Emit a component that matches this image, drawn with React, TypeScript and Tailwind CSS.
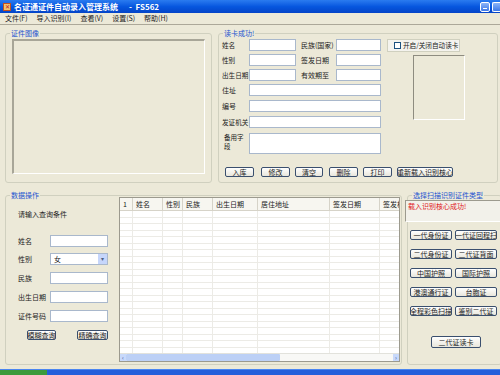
import React from "react";

const font = "font-['Noto_Sans_CJK_SC','Noto_Sans',sans-serif]";

function Group({ title, className, children }: { title: string; className?: string; children?: React.ReactNode }) {
  return (
    <div className={"relative border border-[#d0d0bf] rounded-[3px] " + (className ?? "")}>
      <span className="absolute -top-[6px] left-[4px] bg-[#ece9d8] px-[1px] text-[7px] leading-[10px] text-[#2454d0] whitespace-nowrap">{title}</span>
      {children}
    </div>
  );
}

function Field({ w, h = 12 }: { w: number; h?: number }) {
  return <div className="bg-white border border-[#a9b8cc] shrink-0" style={{ width: w, height: h }} />;
}

function Btn({ label, w, className }: { label: string; w: number; className?: string }) {
  return (
    <div
      className={"h-[10px] flex items-center justify-center border border-[#3a4f6e] rounded-[2px] bg-gradient-to-b from-white to-[#e8e6dc] text-[7px] leading-none text-[#222] whitespace-nowrap overflow-hidden shrink-0 " + (className ?? "")}
      style={{ width: w }}
    >
      {label}
    </div>
  );
}

const cols = [
  { t: "1", w: 13 },
  { t: "姓名", w: 30 },
  { t: "性别", w: 20 },
  { t: "民族", w: 30 },
  { t: "出生日期", w: 45 },
  { t: "居住地址", w: 72 },
  { t: "签发日期", w: 50 },
  { t: "签发机", w: 20 },
];

export default function App() {
  const rows = Array.from({ length: 22 });

  return (
    <div className={"w-[500px] h-[375px] overflow-hidden bg-[#ece9d8] flex flex-col text-[#222] whitespace-nowrap " + font}>
      {/* title bar */}
      <div className="h-[13px] flex items-center bg-gradient-to-b from-[#2a7bf0] via-[#0757df] to-[#0444c8] pl-[3px]">
        <div className="w-[8px] h-[8px] bg-[#f0c070] border border-[#c05020] flex items-center justify-center text-[6px] leading-none text-[#c02020]">✕</div>
        <span className="ml-[3px] text-[8px] leading-none font-bold text-white whitespace-pre">名证通证件自动录入管理系统      -  FS562</span>
        <div className="ml-auto flex gap-[2px]">
          <div className="w-[10px] h-[10px] rounded-[2px] border border-white bg-gradient-to-b from-[#8cb4f8] to-[#3c78e8] flex items-end justify-center pb-[2px]">
            <div className="w-[4px] h-[1px] bg-white" />
          </div>
          <div className="w-[8px] h-[10px] rounded-l-[2px] border border-r-0 border-white bg-gradient-to-b from-[#8cb4f8] to-[#3c78e8]" />
        </div>
      </div>

      {/* menu bar */}
      <div className="h-[12px] flex items-center gap-[9px] pl-[5px] text-[7px] leading-none border-b border-[#aca899]">
        <span>文件(F)</span>
        <span>导入识别(I)</span>
        <span>查看(V)</span>
        <span>设置(S)</span>
        <span>帮助(H)</span>
      </div>

      {/* body */}
      <div className="flex-1 flex">
        <div className="w-[3px] bg-[#0a3fc8]" />
        <div className="flex-1 flex flex-col pl-[5px]">
          {/* top row */}
          <div className="flex mt-[8px]">
            <Group title="证件图像" className="w-[207px] h-[150px] flex flex-col pt-[4px] px-[6px]">
              <div className="mt-[1px] w-[193px] h-[135px] border-t-2 border-l-2 border-[#a8a698] border-b border-r border-b-white border-r-white" />
            </Group>

            <Group title="读卡成功!" className="ml-[6px] w-[280px] h-[150px] pl-[3px] pt-[5px] text-[7px] leading-none">
              <div className="flex">
                <div className="flex flex-col w-[160px]">
                  {[
                    ["姓名", "民族(国家)"],
                    ["性别", "签发日期"],
                    ["出生日期", "有效期至"],
                  ].map(([a, b], i) => (
                    <div key={a} className={"flex items-center " + (i > 0 ? "mt-[3px]" : "")}>
                      <span className="w-[27px] text-[6.6px]">{a}</span>
                      <Field w={47} />
                      <span className="w-[35px] ml-[5px]">{b}</span>
                      <Field w={45} />
                    </div>
                  ))}
                  <div className="flex items-center mt-[3px]">
                    <span className="w-[27px]">住址</span>
                    <Field w={132} />
                  </div>
                  <div className="flex items-center mt-[4px]">
                    <span className="w-[27px]">编号</span>
                    <Field w={132} />
                  </div>
                  <div className="flex items-center mt-[4px]">
                    <span className="w-[27px] text-[6.6px]">发证机关</span>
                    <Field w={132} />
                  </div>
                  <div className="flex items-start mt-[5px]">
                    <div className="w-[27px] pl-[2px] flex flex-col text-[6.5px] leading-[9px]">
                      <span>备用字</span>
                      <span>段</span>
                    </div>
                    <Field w={132} h={21} />
                  </div>
                </div>
                <div className="flex flex-col ml-[5px]">
                  <div className="w-[73px] h-[13px] border border-[#d0d0bf] bg-[#f4f3ee] flex items-center pl-[6px] gap-[2px]">
                    <div className="w-[7px] h-[7px] bg-white border border-[#1c5180]" />
                    <span className="text-[6.6px]">开启/关闭自动读卡</span>
                  </div>
                  <div className="ml-[26px] mt-[3px] w-[52px] h-[65px] border border-t-[#8e8c80] border-l-[#8e8c80] border-b-white border-r-white" />
                </div>
              </div>
              <div className="flex items-center mt-[13px] ml-[3px]">
                <Btn label="入库" w={29} />
                <Btn label="修改" w={29} className="ml-[7px]" />
                <Btn label="清空" w={28} className="ml-[5px]" />
                <Btn label="删除" w={29} className="ml-[6px]" />
                <Btn label="打印" w={29} className="ml-[5px]" />
                <Btn label="重新载入识别核心" w={56} className="ml-[5px] text-[6px]" />
              </div>
            </Group>
          </div>

          {/* bottom row */}
          <div className="flex mt-[12px]">
            <Group title="数据操作" className="w-[397px] h-[170px] flex text-[7px] leading-none">
              <div className="w-[113px] flex flex-col pl-[12px] pt-[15px]">
                <span>请输入查询条件</span>
                <div className="flex items-center mt-[17px]">
                  <span className="w-[32px]">姓名</span>
                  <Field w={58} />
                </div>
                <div className="flex items-center mt-[6px]">
                  <span className="w-[32px]">性别</span>
                  <div className="w-[58px] h-[12px] bg-white border border-[#a9b8cc] flex items-center pl-[3px]">
                    <span>女</span>
                    <div className="ml-auto w-[9px] h-[10px] bg-[#c6d6fb] flex items-center justify-center text-[6px] text-[#4d6185]">▾</div>
                  </div>
                </div>
                <div className="flex items-center mt-[7px]">
                  <span className="w-[32px]">民族</span>
                  <Field w={58} />
                </div>
                <div className="flex items-center mt-[7px]">
                  <span className="w-[32px]">出生日期</span>
                  <Field w={58} />
                </div>
                <div className="flex items-center mt-[7px]">
                  <span className="w-[32px]">证件号码</span>
                  <Field w={58} />
                </div>
                <div className="flex mt-[8px] pl-[9px]">
                  <Btn label="模糊查询" w={29} className="text-[6.5px]" />
                  <Btn label="精确查询" w={31} className="ml-[21px] text-[6.5px]" />
                </div>
              </div>

              <div className="mt-[1px] w-[281px] h-[165px] border border-[#9c9a8e] bg-white flex flex-col overflow-hidden">
                <div className="h-[13px] flex bg-[#f7f6f0] border-b border-[#d6d3c8]">
                  {cols.map((c) => (
                    <div key={c.t} className="h-full flex items-center pl-[3px] border-r border-[#d6d3c8] shrink-0 overflow-hidden" style={{ width: c.w }}>
                      {c.t}
                    </div>
                  ))}
                </div>
                <div className="flex-1 flex flex-col overflow-hidden">
                  {rows.map((_, i) => (
                    <div key={i} className="h-[6.5px] flex border-b border-[#ecebe6] shrink-0">
                      {cols.map((c) => (
                        <div key={c.t} className="h-full border-r border-[#ecebe6] shrink-0" style={{ width: c.w }} />
                      ))}
                    </div>
                  ))}
                </div>
                <div className="h-[8px] flex items-center bg-[#f8f8f6] border-t border-[#e2e2dc]">
                  <div className="w-[6px] h-[7px] bg-[#c8d9fb] flex items-center justify-center text-[6px] text-[#3856a0]">‹</div>
                  <div className="w-[154px] h-[7px] bg-[#bcd0f6] rounded-[1px]" />
                  <div className="ml-auto w-[6px] h-[7px] bg-[#c8d9fb] flex items-center justify-center text-[6px] text-[#3856a0]">›</div>
                </div>
              </div>
            </Group>

            <Group title="选择扫描识别证件类型" className="ml-[5px] w-[95px] h-[170px] text-[7px] leading-none">
              <div className="mt-[4px] ml-[-3px] h-[22px] w-[96px] bg-[#f2f1ea] border border-t-[#9c9a8e] border-l-[#9c9a8e] border-b-white border-r-white pl-[2px] pt-[2px] text-[#e0201c]">
                载入识别核心成功!
              </div>
              <div className="grid grid-cols-[42px_42px] gap-x-[3px] gap-y-[9px] mt-[8px] ml-[2px]">
                <Btn label="一代身份证" w={42} />
                <Btn label="一代证回程扫" w={42} />
                <Btn label="二代身份证" w={42} />
                <Btn label="二代证背面" w={42} />
                <Btn label="中国护照" w={42} />
                <Btn label="国际护照" w={42} />
                <Btn label="港澳通行证" w={42} />
                <Btn label="台胞证" w={42} />
                <Btn label="全程彩色扫描" w={42} />
                <Btn label="鉴别二代证" w={42} />
              </div>
              <Btn label="二代证读卡" w={50} className="mt-[20px] ml-[23px] h-[12px]" />
            </Group>
          </div>
        </div>
      </div>

      {/* taskbar */}
      <div className="h-[6px] flex bg-[#245edb] border-t border-[#4b86f0]">
        <div className="w-[47px] h-full bg-[#3c9a3c]" />
      </div>
    </div>
  );
}
